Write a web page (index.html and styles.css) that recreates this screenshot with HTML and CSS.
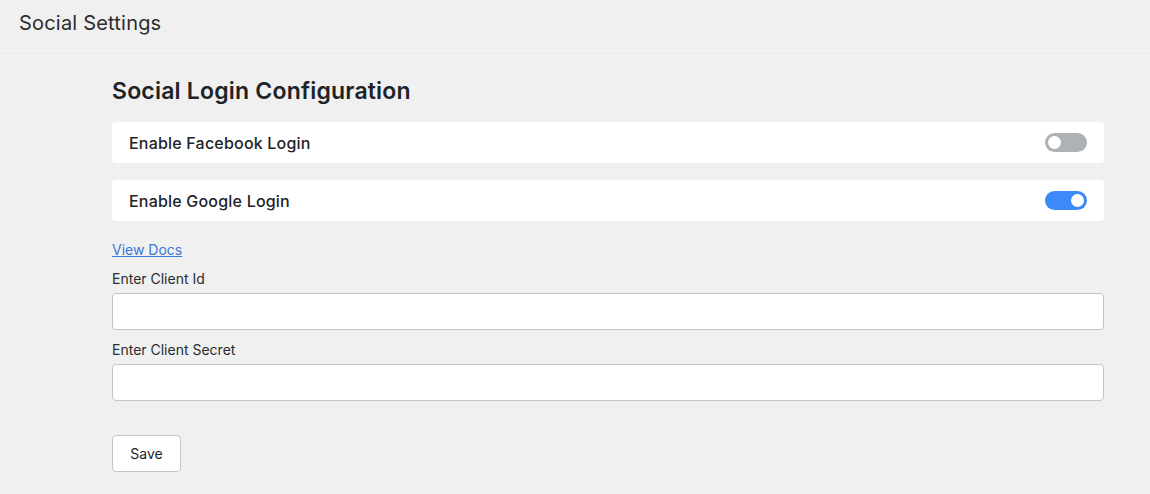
FILE: index.html
```html
<!DOCTYPE html>
<html lang="en">
<head>
    <meta charset="UTF-8">
    <title>Social Settings</title>
    <link rel="stylesheet" href="styles.css">
</head>
<body>

<div class="topbar">Social Settings</div>

<div class="content">
    <h2>Social Login Configuration</h2>

    <div class="card">
        <span>Enable Facebook Login</span>
        <label class="switch">
            <input type="checkbox">
            <span class="slider"></span>
        </label>
    </div>
    <div class="card">
        <span>Enable Google Login</span>
        <label class="switch">
            <input type="checkbox" checked>
            <span class="slider"></span>
        </label>
    </div>

    <a href="#" class="docs">View Docs</a>

    <div class="field">
        <label for="client-id">Enter Client Id</label>
        <input type="text" id="client-id">
    </div>
    <div class="field">
        <label for="client-secret">Enter Client Secret</label>
        <input type="text" id="client-secret">
    </div>

    <button id="save">Save</button>
</div>

</body>
</html>
```

FILE: styles.css
```css
* {
    box-sizing: border-box;
}

body {
    font-family: Inter, "Noto Sans", sans-serif;
    margin: 0;
    background: #f0f0f1;
    color: #1d2327;
}

.topbar {
    height: 54px;
    padding: 11px 19px 0;
    background: #f0f0f0;
    border-bottom: 1px solid #e8ebe6;
    font-size: 20px;
    letter-spacing: 0.2px;
    color: #2c2c2c;
}

.content {
    display: flex;
    flex-direction: column;
    width: 992px;
    margin-left: 112px;
    padding-top: 23px;
}

h2 {
    margin: 0 0 17px;
    font-size: 23px;
    font-weight: 600;
    line-height: 28px;
    letter-spacing: 0.2px;
}

.card {
    display: flex;
    justify-content: space-between;
    align-items: center;
    height: 41px;
    padding: 0 17px;
    margin-bottom: 17px;
    background: #fff;
    border-radius: 4px;
    font-size: 16px;
    font-weight: 500;
    letter-spacing: 0.2px;
}

.switch {
    position: relative;
    width: 42px;
    height: 19px;
    cursor: pointer;
}

.switch input {
    display: none;
}

.slider {
    position: absolute;
    inset: 0;
    background: #aeb2b5;
    border-radius: 10px;
}

.slider::before {
    content: '';
    position: absolute;
    left: 3px;
    top: 3px;
    width: 13px;
    height: 13px;
    background: #fff;
    border-radius: 50%;
}

.switch input:checked + .slider {
    background: #3c8af7;
}

.switch input:checked + .slider::before {
    left: 26px;
}

.docs {
    align-self: flex-start;
    margin-top: 2px;
    font-size: 14px;
    color: #3a78d2;
    line-height: 20px;
}

.field {
    display: flex;
    flex-direction: column;
    gap: 4px;
    margin-top: 9px;
}

.field + .field {
    margin-top: 10px;
}

.field label {
    font-size: 14px;
    line-height: 20px;
    color: #2c2c2c;
}

.field input {
    height: 37px;
    border: 1px solid #c3c4c7;
    border-radius: 4px;
    background: #fff;
    padding: 0 8px;
    font-size: 14px;
}

button {
    align-self: flex-start;
    margin-top: 34px;
    width: 69px;
    height: 37px;
    background: #fff;
    border: 1px solid #c3c4c7;
    border-radius: 4px;
    font-family: inherit;
    font-size: 14px;
    color: #1d2327;
    cursor: pointer;
}
```
